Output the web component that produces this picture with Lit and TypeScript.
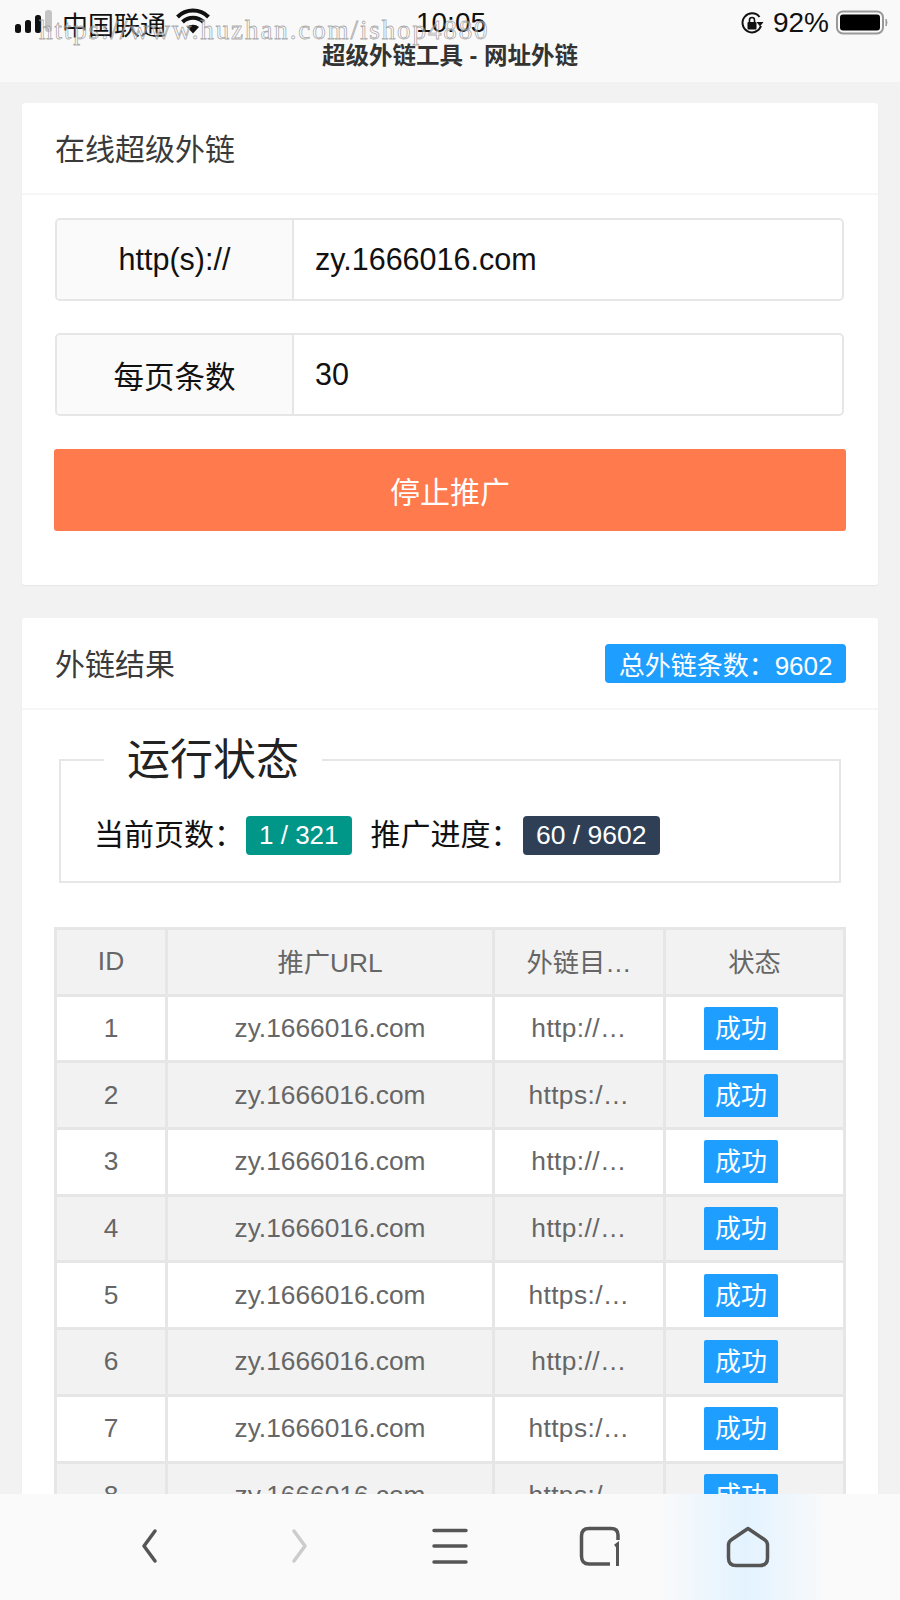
import { LitElement, html, css } from "lit";
import { customElement } from "lit/decorators.js";

const rows: [number, string][] = [
  [1, "http://…"], [2, "https:/…"], [3, "http://…"], [4, "http://…"],
  [5, "https:/…"], [6, "http://…"], [7, "https:/…"], [8, "https:/…"],
];

@customElement("app-root")
export class AppRoot extends LitElement {
  static styles = css`
    :host {
      display: block;
      position: relative;
      width: 900px;
      height: 1600px;
      overflow: hidden;
      background: #f2f2f2;
      font-family: "Liberation Sans", "Noto Sans CJK SC", sans-serif;
      color: #333;
    }
    .top { height: 82px; background: #f9f9f9; display: flex; flex-direction: column; }
    .status { height: 46px; display: grid; grid-template-columns: 1fr auto 1fr; align-items: center; padding: 0 12px 0 14px; color: #111; }
    .status-left { display: flex; align-items: center; gap: 10px; font-size: 26px; }
    .signal { margin-top: -3px; }
    .wifi { margin-top: -4px; }
    .time { font-size: 28px; }
    .status-right { display: flex; align-items: center; justify-content: flex-end; gap: 9px; font-size: 28px; }
    .battery { margin-left: -2px; }
    .page-title { text-align: center; font-size: 23.5px; font-weight: bold; color: #333; line-height: 20px; }
    .main { padding: 21px 22px 0; display: flex; flex-direction: column; gap: 33px; }
    .card { background: #fff; border-radius: 3px; box-shadow: 0 1px 2px rgba(0,0,0,.05); }
    .card-head { height: 87px; padding: 0 32px 3px 33px; border-bottom: 2px solid #f6f6f6; display: flex; align-items: center; justify-content: space-between; font-size: 30px; color: #3a3a3a; }
    .card-head .badge { margin-top: 3px; padding: 0 13.500px; }
    .card-body { padding: 23px 32px 54px; display: flex; flex-direction: column; }
    .group { display: flex; height: 83px; width: 789px; margin-left: 1px; box-sizing: border-box; border: 2px solid #e6e6e6; border-radius: 5px; margin-bottom: 32px; font-size: 30.5px; color: #111; }
    .addon { width: 235px; flex: none; background: #fafafa; border-right: 2px solid #e6e6e6; border-radius: 3px 0 0 3px; display: flex; align-items: center; justify-content: center; }
    .value { flex: 1; display: flex; align-items: center; padding-left: 21px; }
    .btn { height: 82px; width: 792px; margin-top: 1px; background: #ff7a4d; color: #fff; font-size: 30px; border-radius: 3px; display: flex; align-items: center; justify-content: center; }
    .badge { display: inline-flex; align-items: center; height: 39px; padding: 0 13px; border-radius: 4px; color: #fff; font-size: 26px; background: #1e9fff; }
    .green { background: #009688; margin: 0 19px 0 2px; }
    .navy { background: #2f4056; margin-left: 2px; padding: 0 13.500px; font-size: 26.500px; }
    .body2 { padding: 25px 32px 0; }
    fieldset { margin: 0 5px; padding: 0 33px 26px; border: 2px solid #e6e6e6; height: 148px; box-sizing: border-box; }
    legend { font-size: 43px; line-height: 50px; padding: 0 23px; margin-left: 10px; color: #222; }
    .stats { display: flex; align-items: center; font-size: 30px; color: #111; margin-top: 25px; }
    .stat-label { padding-bottom: 6px; }
    table { margin-top: 44px; width: 792px; table-layout: fixed; border-collapse: collapse; font-size: 26.3px; color: #666; text-align: center; }
    th, td { border: 3px solid #e6e6e6; height: 63.700px; padding: 0; font-weight: normal; overflow: hidden; white-space: nowrap; }
    th.cjk { padding-bottom: 3px; height: 60.700px; }
    td.url { letter-spacing: .4px; }
    thead tr, tr.even { background: #f2f2f2; }
    .c1 { width: 111px; } .c2 { width: 327px; } .c3 { width: 171px; } .c4 { width: 180px; }
    .ok { display: block; width: 74px; height: 43px; margin: 0 0 0 38px; border-radius: 2px 2px 0 0; background: #1e9fff; color: #fff; line-height: 44px; font-size: 26px; }
    .nav { position: absolute; left: 0; right: 0; bottom: 0; height: 106px; background: #fafafa; display: block; }
    .nav svg { display: block; }
    .mark { position: absolute; left: 39px; top: 14px; font-family: "Liberation Serif", serif; font-size: 27px; letter-spacing: 1.9px; line-height: 32px; color: rgba(255,255,255,.45); -webkit-text-stroke: .8px rgba(125,125,125,.65); white-space: nowrap; }
  `;

  render() {
    return html`
      <div class="top">
        <div class="status">
          <div class="status-left">
            <svg class="signal" width="38" height="26" viewBox="0 0 38 26" fill="#111">
              <rect x="1" y="15" width="6" height="9" rx="2.5"/><rect x="11" y="11" width="6" height="13" rx="2.5"/>
              <rect x="21" y="6" width="6" height="18" rx="2.5"/><rect x="31" y="1" width="7" height="22" rx="3" fill="#c4c4c4"/>
            </svg>
            <span>中国联通</span>
            <svg class="wifi" width="34" height="26" viewBox="0 0 34 26" fill="none" stroke="#111" stroke-width="4">
              <path d="M1.5 9 A 22 22 0 0 1 32.5 9"/><path d="M6.5 14 A 15 15 0 0 1 27.5 14"/>
              <path d="M11 19 A 9 9 0 0 1 23 19 L17 25.5 Z" fill="#111" stroke="none"/>
            </svg>
          </div>
          <div class="time">10:05</div>
          <div class="status-right">
            <svg width="24" height="24" viewBox="0 0 24 24" fill="none" stroke="#111" stroke-width="2">
              <path d="M21 15 A 9.5 9.5 0 1 1 19.5 6"/><path d="M23.5 11 L20 15.5 L16.5 11 Z" fill="#111" stroke="none"/>
              <rect x="7.5" y="11" width="9" height="7.5" rx="1" fill="#111" stroke="none"/><path d="M9.5 11 V9 A2.5 2.5 0 0 1 14.5 9 V11" stroke-width="1.6"/>
            </svg>
            <span>92%</span>
            <svg class="battery" width="52" height="26" viewBox="0 0 52 26">
              <rect x="1" y="1.5" width="46" height="22" rx="6" fill="none" stroke="#999" stroke-width="2"/>
              <rect x="4" y="4.5" width="40" height="16" rx="3" fill="#000"/>
              <path d="M50 9 Q52 12.5 50 16 Z" fill="#999" stroke="#999" stroke-width="1"/>
            </svg>
          </div>
        </div>
        <div class="page-title">超级外链工具 - 网址外链</div>
      </div>

      <div class="main">
        <section class="card">
          <div class="card-head">在线超级外链</div>
          <div class="card-body">
            <div class="group"><div class="addon">http(s)://</div><div class="value">zy.1666016.com</div></div>
            <div class="group"><div class="addon">每页条数</div><div class="value">30</div></div>
            <div class="btn">停止推广</div>
          </div>
        </section>

        <section class="card">
          <div class="card-head">外链结果<span class="badge">总外链条数：9602</span></div>
          <div class="body2">
            <fieldset>
              <legend>运行状态</legend>
              <div class="stats">
                <span class="stat-label">当前页数：</span><span class="badge green">1 / 321</span>
                <span class="stat-label">推广进度：</span><span class="badge navy">60 / 9602</span>
              </div>
            </fieldset>
            <table>
              <colgroup><col class="c1"/><col class="c2"/><col class="c3"/><col class="c4"/></colgroup>
              <thead><tr><th>ID</th><th class="cjk">推广URL</th><th class="cjk">外链目…</th><th class="cjk">状态</th></tr></thead>
              <tbody>
                ${rows.map(([id, url]) => html`
                  <tr class=${id % 2 === 0 ? "even" : ""}>
                    <td>${id}</td><td>zy.1666016.com</td><td class="url">${url}</td><td><span class="ok">成功</span></td>
                  </tr>`)}
              </tbody>
            </table>
          </div>
        </section>
      </div>

      <div class="mark">https://www.huzhan.com/ishop4880</div>

      <div class="nav">
        <svg width="900" height="106" viewBox="0 0 900 106" fill="none">
          <defs>
            <linearGradient id="glow" x1="0" x2="1" y1="0" y2="0">
              <stop offset="0" stop-color="#e3f3ff" stop-opacity="0"/>
              <stop offset=".5" stop-color="#e3f3ff"/>
              <stop offset="1" stop-color="#e3f3ff" stop-opacity="0"/>
            </linearGradient>
          </defs>
          <rect x="660" y="0" width="170" height="106" fill="url(#glow)"/>
          <path d="M155 37 L144 52 L155 67" stroke="#555" stroke-width="3.5" stroke-linecap="round" stroke-linejoin="round"/>
          <path d="M294 37 L305 52 L294 67" stroke="#ccc" stroke-width="3.5" stroke-linecap="round" stroke-linejoin="round"/>
          <path d="M434 36.5 H466 M434 52 H466 M434 68 H466" stroke="#555" stroke-width="3.5" stroke-linecap="round"/>
          <path d="M618 46 V41 Q618 34.500 611 34.500 H589 Q581.500 34.500 581.500 42 V62 Q581.500 70 589 70 H610" stroke="#555" stroke-width="3.5"/>
          <path d="M615 52 L617.500 50 V72" stroke="#555" stroke-width="3"/>
          <path d="M748 34.500 L765 46 Q767.500 48 767.500 51 V64 Q767.500 71.500 760 71.500 H736 Q728.500 71.500 728.500 64 V51 Q728.500 48 731 46 Z" stroke="#555" stroke-width="3.5" stroke-linejoin="round"/>
        </svg>
      </div>
    `;
  }
}
